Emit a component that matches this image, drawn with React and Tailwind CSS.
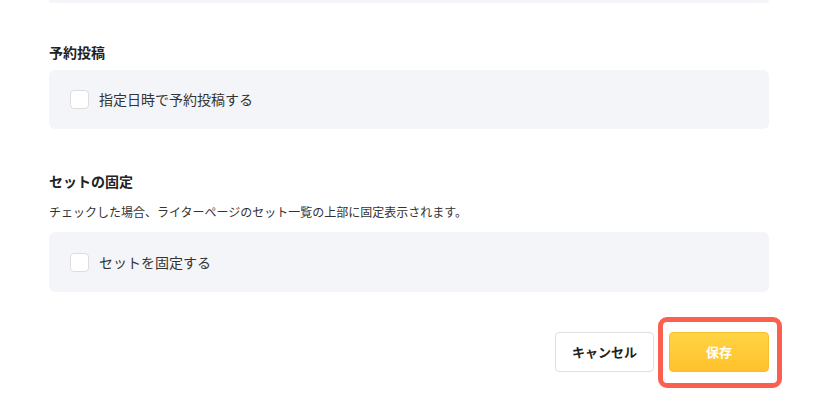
export default function App() {
  const font = { fontFamily: '"Noto Sans CJK JP", "Noto Sans", sans-serif' };
  return (
    <div className="w-[834px] h-[412px] bg-white overflow-hidden" style={font}>
      <div className="w-[720px] ml-[49px]">
        <div className="h-[3px] bg-[#f4f5f8] rounded-b-md" />
        <div className="mt-[39px] text-[14px] leading-[20px] font-bold text-[#222]">予約投稿</div>
        <div className="mt-[8px] h-[59px] bg-[#f4f5f8] rounded-md flex items-center pl-[21px]">
          <div className="w-[19px] h-[19px] bg-white border border-[#dddddd] rounded-[4px]" />
          <span className="ml-[10px] text-[14px] text-[#333]">指定日時で予約投稿する</span>
        </div>
        <div className="mt-[42px] text-[14px] leading-[20px] font-bold text-[#222]">セットの固定</div>
        <div className="mt-[12px] text-[12px] leading-[18px] text-[#333]">チェックした場合、ライターページのセット一覧の上部に固定表示されます。</div>
        <div className="mt-[11px] h-[60px] bg-[#f4f5f8] rounded-md flex items-center pl-[21px]">
          <div className="w-[19px] h-[19px] bg-white border border-[#dddddd] rounded-[4px]" />
          <span className="ml-[10px] text-[14px] text-[#333]">セットを固定する</span>
        </div>
        <div className="mt-[40px] flex justify-end gap-[15px]">
          <button className="w-[99px] h-[40px] bg-white border border-[#e0e0e0] rounded-[4px] text-[13px] font-bold text-[#222]">キャンセル</button>
          <div className="relative">
            <button className="w-[100px] h-[40px] rounded-[4px] bg-gradient-to-b from-[#ffd445] to-[#ffc12a] border border-[#f9c02b] text-[13px] font-bold text-white">保存</button>
            <div className="absolute left-[-11px] top-[-15px] w-[124px] h-[71px] border-[5px] border-[#fa5f50] rounded-[9px]" />
          </div>
        </div>
      </div>
    </div>
  );
}
